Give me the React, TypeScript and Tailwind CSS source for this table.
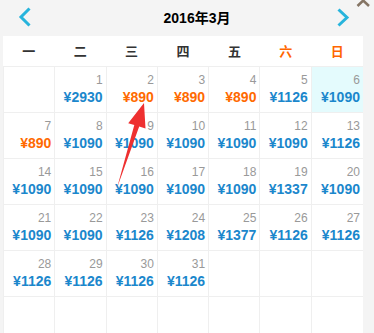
import React from "react";

type Day = { d: number; p: number; cheap?: boolean; today?: boolean } | null;

const weeks: Day[][] = [
  [
    null,
    { d: 1, p: 2930 },
    { d: 2, p: 890, cheap: true },
    { d: 3, p: 890, cheap: true },
    { d: 4, p: 890, cheap: true },
    { d: 5, p: 1126 },
    { d: 6, p: 1090, today: true },
  ],
  [
    { d: 7, p: 890, cheap: true },
    { d: 8, p: 1090 },
    { d: 9, p: 1090 },
    { d: 10, p: 1090 },
    { d: 11, p: 1090 },
    { d: 12, p: 1090 },
    { d: 13, p: 1126 },
  ],
  [
    { d: 14, p: 1090 },
    { d: 15, p: 1090 },
    { d: 16, p: 1090 },
    { d: 17, p: 1090 },
    { d: 18, p: 1090 },
    { d: 19, p: 1337 },
    { d: 20, p: 1090 },
  ],
  [
    { d: 21, p: 1090 },
    { d: 22, p: 1090 },
    { d: 23, p: 1126 },
    { d: 24, p: 1208 },
    { d: 25, p: 1377 },
    { d: 26, p: 1126 },
    { d: 27, p: 1126 },
  ],
  [
    { d: 28, p: 1126 },
    { d: 29, p: 1126 },
    { d: 30, p: 1126 },
    { d: 31, p: 1126 },
    null,
    null,
    null,
  ],
  [null, null, null, null, null, null, null],
];

const weekdays = ["一", "二", "三", "四", "五", "六", "日"];

export default function App() {
  return (
    <div
      className="relative w-[374px] h-[333px] overflow-hidden bg-[#f4f4f4]"
      style={{ fontFamily: '"Liberation Sans", "Noto Sans CJK SC", sans-serif' }}
    >
      <div className="flex h-[36px] items-center">
        <svg width="31" height="36" viewBox="0 0 31 36" className="shrink-0">
          <polyline points="29.5,8.5 21,17 29.5,25.5" fill="none" stroke="#27b4dc" strokeWidth="3" />
        </svg>
        <div className="flex-1 pl-[26px] text-center text-[14px] font-bold text-black leading-none">
          2016年3月
        </div>
        <svg width="37" height="36" viewBox="337 0 37 36" className="shrink-0">
          <polyline points="338.5,9.5 347,17.5 338.5,25.5" fill="none" stroke="#27b4dc" strokeWidth="3" />
        </svg>
      </div>

      <div className="ml-[3px] w-[360px] bg-white">
        <div className="grid h-[30px] grid-cols-7 items-center text-center">
          {weekdays.map((w, i) => (
            <span
              key={w}
              className={`text-[13px] font-bold ${i >= 5 ? "text-[#ff6600]" : "text-[#333]"}`}
              style={{ fontFamily: '"Noto Sans CJK SC", sans-serif' }}
            >
              {w}
            </span>
          ))}
        </div>
        <div className="grid grid-cols-7 border-t border-l border-[#efefef]">
          {weeks.flat().map((c, i) => (
            <div
              key={i}
              className={`flex h-[46px] flex-col items-end border-b border-[#efefef] pr-[3px] pt-[6px] ${
                i % 7 === 6 ? "" : "border-r"
              } ${c?.today ? "bg-[#e4fbfd]" : ""}`}
            >
              {c && (
                <>
                  <span className="text-[12px] leading-[14px] text-[#999]">{c.d}</span>
                  <span
                    className={`mt-[2px] text-[14px] font-bold leading-[16px] ${
                      c.cheap ? "text-[#ff6a00]" : "text-[#1b87cc]"
                    }`}
                  >
                    ¥{c.p}
                  </span>
                </>
              )}
            </div>
          ))}
        </div>
      </div>

      {/* overlays: scroll-top chevron and red annotation arrow */}
      <svg className="pointer-events-none absolute inset-0" width="374" height="333">
        <polyline points="357.5,6 363.2,0.5 369,6" fill="none" stroke="#857565" strokeWidth="2.5" />
        <polygon
          points="144,103 145.5,128.5 139.2,126.6 117,188 134.3,125.1 128.2,123.3"
          fill="#ee3030"
        />
      </svg>
    </div>
  );
}
